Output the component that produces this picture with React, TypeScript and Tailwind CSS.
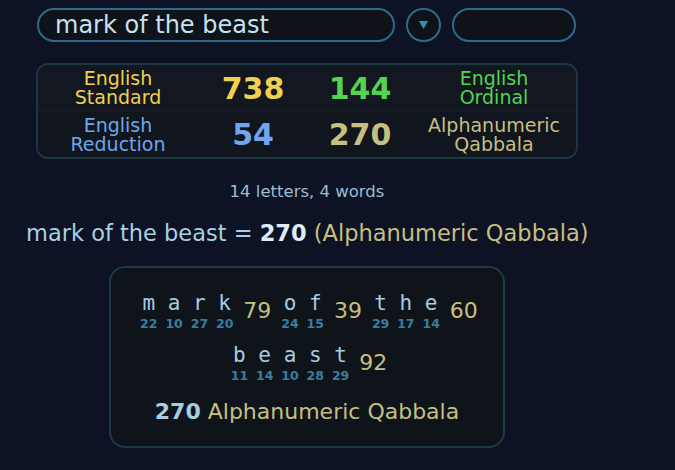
import { useState } from 'react';

type Cell = { label: string[]; value: number; color: string };

const rows: Cell[][] = [
    [
        { label: ['English', 'Standard'], value: 738, color: 'text-[#efd050]' },
        { label: ['English', 'Ordinal'], value: 144, color: 'text-[#52d452]' },
    ],
    [
        { label: ['English', 'Reduction'], value: 54, color: 'text-[#6fa6ee]' },
        { label: ['Alphanumeric', 'Qabbala'], value: 270, color: 'text-[#c6bf80]' },
    ],
];

const words: { letters: [string, number][]; sum: number }[][] = [
    [
        { letters: [['m', 22], ['a', 10], ['r', 27], ['k', 20]], sum: 79 },
        { letters: [['o', 24], ['f', 15]], sum: 39 },
        { letters: [['t', 29], ['h', 17], ['e', 14]], sum: 60 },
    ],
    [{ letters: [['b', 11], ['e', 14], ['a', 10], ['s', 28], ['t', 29]], sum: 92 }],
];

const sans = "font-['DejaVu_Sans',sans-serif]";

export default function App() {
    const [phrase, setPhrase] = useState('mark of the beast');

    return (
        <div className={`min-h-[470px] w-full bg-[#0d1324] pt-[8px] ${sans}`}>
            <div className="ml-[26px] w-[562px]">
                <div className="ml-[11px] flex items-center gap-[11px]">
                    <input
                        value={phrase}
                        onChange={(e) => setPhrase(e.target.value)}
                        className="h-[34px] w-[358px] rounded-full border-2 border-[#2c6b8c] bg-[#0e1219] px-[16px] text-[24px] text-[#c6e1f1] outline-none"
                    />
                    <button className="flex h-[34px] w-[35px] items-center justify-center rounded-full border-2 border-[#2c6b8c] bg-[#0e1219]">
                        <svg width="9" height="8" viewBox="0 0 9 8"><path d="M0 0h9L4.5 8z" fill="#3b8db0" /></svg>
                    </button>
                    <input className="h-[34px] w-[124px] rounded-full border-2 border-[#2c6b8c] bg-[#0e1219] px-3 text-[18px] text-[#c6e1f1] outline-none" />
                </div>

                <div className="mx-[10px] mt-[21px] overflow-hidden rounded-[12px] border-2 border-[#1c3644] bg-[#10151e]">
                    {rows.map((row, i) => (
                        <div key={i} className={`grid h-[46px] grid-cols-[160px_110px_104px_164px] items-center ${i === 0 ? 'bg-[#131820]' : 'border-t border-[#161d26] bg-[#11161e]'}`}>
                            <div className={`text-center text-[19px] leading-[19px] ${row[0].color}`}>
                                {row[0].label.map((l) => <div key={l}>{l}</div>)}
                            </div>
                            <div className={`text-center text-[30px] font-bold ${row[0].color}`}>{row[0].value}</div>
                            <div className={`text-center text-[30px] font-bold ${row[1].color}`}>{row[1].value}</div>
                            <div className={`text-center text-[19px] leading-[19px] ${row[1].color}`}>
                                {row[1].label.map((l) => <div key={l}>{l}</div>)}
                            </div>
                        </div>
                    ))}
                </div>

                <div className="mt-[21px] text-center text-[16.5px] text-[#9bbcd2]">14 letters, 4 words</div>

                <div className="mt-[12px] whitespace-nowrap text-[22.5px] text-[#a9cfe3]">
                    {phrase} = <span className="font-bold text-[#dcedf6]">270</span>{' '}
                    <span className="text-[#c6bf80]">(Alphanumeric Qabbala)</span>
                </div>

                <div className="mx-auto mt-[15px] w-[396px] rounded-[16px] border-2 border-[#1d3a48] bg-[#0f141b] pb-[18px] pt-[22px]">
                    <div className="flex flex-col items-center gap-[10px]">
                        {words.map((line, li) => (
                            <div key={li} className="flex gap-[6px]">
                                {line.map((w, wi) => (
                                    <div key={wi} className="flex items-center gap-[6px]">
                                        <div className="flex">
                                            {w.letters.map(([ch, n], ci) => (
                                                <div key={ci} className="flex w-[25.3px] flex-col items-center">
                                                    <span className="font-['DejaVu_Sans_Mono',monospace] text-[21px] leading-[26px] text-[#a6cde2]">{ch}</span>
                                                    <span className="text-[12.5px] font-bold leading-[16px] text-[#3a7da0]">{n}</span>
                                                </div>
                                            ))}
                                        </div>
                                        <span className="text-[22px] text-[#c6bf80]">{w.sum}</span>
                                    </div>
                                ))}
                            </div>
                        ))}
                    </div>
                    <div className="mt-[11px] text-center text-[22px]">
                        <span className="font-bold text-[#a6cde2]">270</span>{' '}
                        <span className="text-[#c6bf80]">Alphanumeric Qabbala</span>
                    </div>
                </div>
            </div>
        </div>
    );
}
